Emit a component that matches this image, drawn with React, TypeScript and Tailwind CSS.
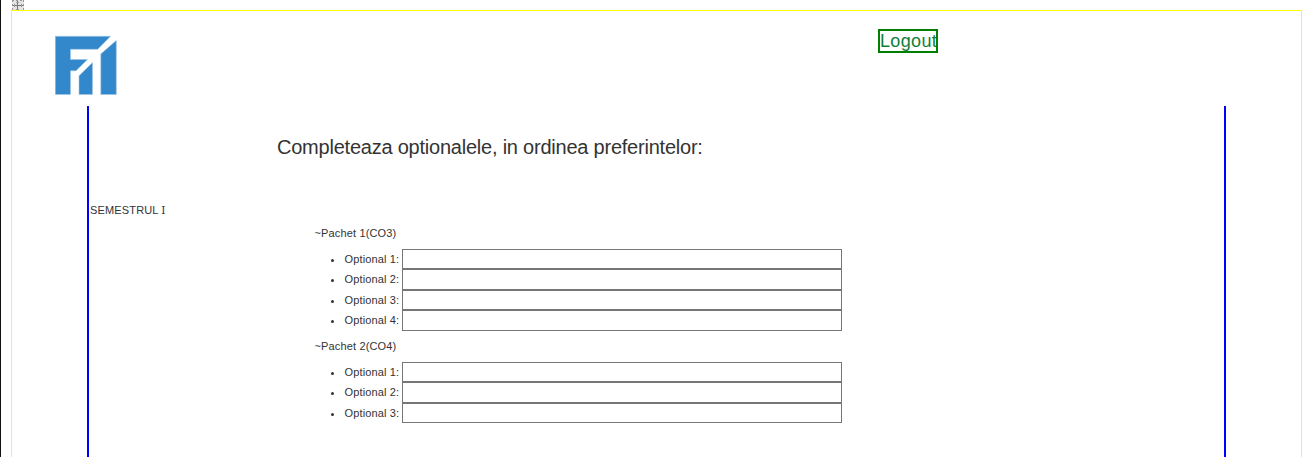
import React from "react";

const packages = [
  { title: "~Pachet 1(CO3)", rows: ["h-[20px]", "h-[21px]", "h-[20px]", "h-[21px]"] },
  { title: "~Pachet 2(CO4)", rows: ["h-[20px]", "h-[21px]", "h-[20px]"] },
];

function MoveHandle() {
  return (
    <svg width="12" height="10" viewBox="0 0 12 10" className="ml-[11px] block" shapeRendering="crispEdges">
      <rect width="12" height="10" fill="#e4e4e4" />
      <path d="M.5 0V10M11.5 0V10M0 .5H12" stroke="#999" strokeDasharray="2 2" fill="none" />
      <path d="M5.5 1V10M1 5.5H11" stroke="#777" fill="none" />
      <path d="M4 2.5H7M4 9.5H7M2.5 4V7M9.5 4V7" stroke="#999" fill="none" />
    </svg>
  );
}

function Logo() {
  return (
    <svg width="62" height="60" viewBox="0 0 62 60" className="ml-[43px] block">
      <g fill="#3388cc" stroke="#9cc6e6" strokeWidth=".6">
        <path d="M.3 1.3H55.5L42.7 14.3H15.5V24.5H32.5L21 35.8H15.5V59.5H.3Z" />
        <path d="M24 40.8L37.5 27.6V59.5H24Z" />
        <path d="M45.8 18.9L61.3 5.4V59.5H45.8Z" />
      </g>
    </svg>
  );
}

export default function App() {
  return (
    <div className="h-[457px] w-[1309px] overflow-hidden border-l border-[#111] bg-white font-['Liberation_Sans',Arial,sans-serif] text-[11px] text-[#333]">
      <div className="h-[10px]"><MoveHandle /></div>
      <main className="ml-[10px] h-[447px] w-[1291px] border border-b-0 border-[#ffff00]">
        <header className="flex h-[95px] items-start">
          <div className="mt-[24px]"><Logo /></div>
          <a className="mt-[18px] ml-[761px] h-[24px] w-[60px] border-2 border-[#008000] text-[18px] leading-[20px] tracking-[0.35px] whitespace-nowrap text-[#108038]">Logout</a>
        </header>
        <section className="ml-[75px] flex h-[351px] w-[1139px] flex-col border-x-2 border-[#0000ff]">
          <h1 className="mt-[29px] ml-[188px] h-[24px] text-[20px] leading-[24px] tracking-[-0.225px] whitespace-nowrap">Completeaza optionalele, in ordinea preferintelor:</h1>
          <div className="mt-[43px] flex h-[16px] items-baseline gap-[3px] pl-[1px] leading-[16px] tracking-[0.15px]">
            <span>SEMESTRUL</span><span className="font-['Noto_Sans',sans-serif]">I</span>
          </div>
          <div className="mt-[7px] ml-[225px] w-[540px]">
            {packages.map((p) => (
              <div key={p.title} className="mb-[7px]">
                <h2 className="h-[24px] pl-[0.5px] leading-[16px] tracking-[0.15px]">{p.title}</h2>
                <ul>
                  {p.rows.map((height, i) => (
                    <li key={i} className={`flex items-start ${height}`}>
                      <span className="mt-[10px] ml-[17px] size-[3px] shrink-0 rounded-full bg-[#333]" />
                      <label className="ml-[10.5px] flex h-full w-[510px] items-start">
                        <span className="mt-[2px] w-[57.5px] shrink-0 leading-[16px] tracking-[0.14px] whitespace-nowrap">Optional {i + 1}:</span>
                        <input className="h-full w-[440px] shrink-0 border border-[#767676] bg-white px-1 outline-none" />
                      </label>
                    </li>
                  ))}
                </ul>
              </div>
            ))}
          </div>
        </section>
      </main>
    </div>
  );
}
